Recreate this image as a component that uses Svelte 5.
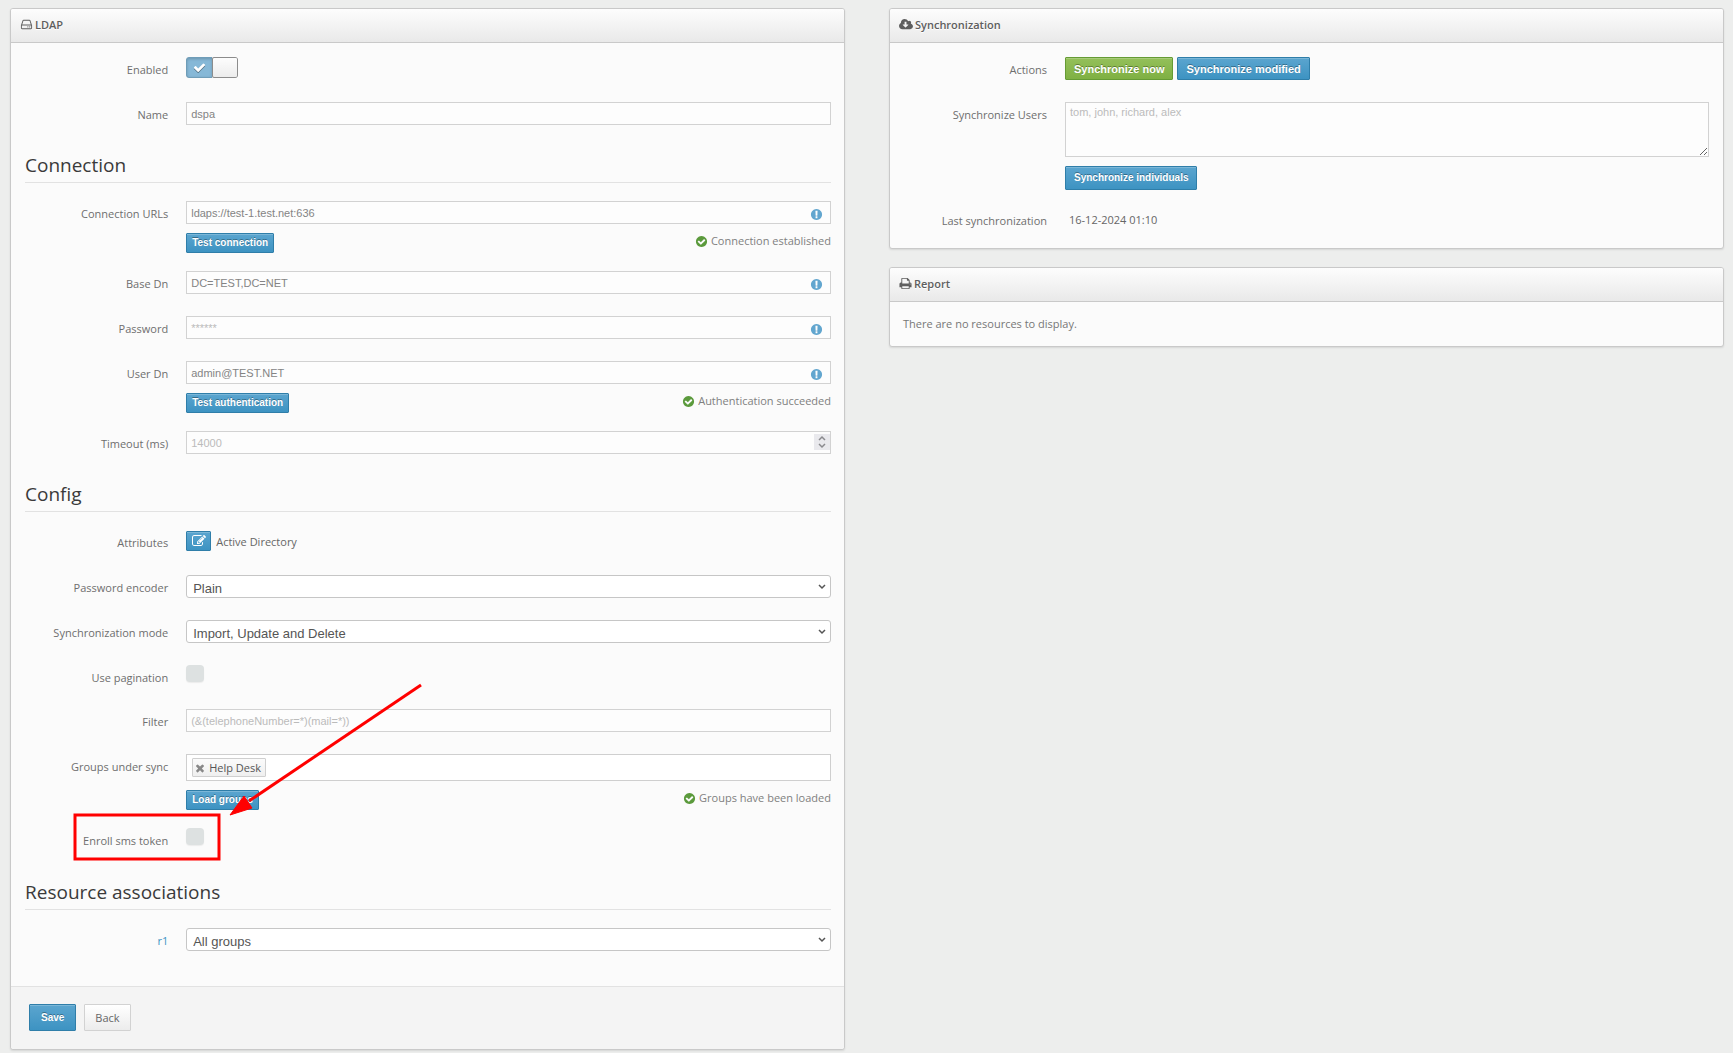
<script>
  let enabled = $state(true);
  let pagination = $state(false);
  let enroll = $state(false);
  let name = $state('dspa');
  let urls = $state('ldaps://test-1.test.net:636');
  let baseDn = $state('DC=TEST,DC=NET');
  let userDn = $state('admin@TEST.NET');
  let groups = $state(['Help Desk']);

  const icons = {
    hdd: 'M1168 1216q0 33-23.5 56.5t-56.5 23.5-56.5-23.5-23.5-56.5 23.5-56.5 56.5-23.5 56.5 23.5 23.5 56.5zm256 0q0 33-23.5 56.5t-56.5 23.5-56.5-23.5-23.5-56.5 23.5-56.5 56.5-23.5 56.5 23.5 23.5 56.5zm112 160v-320q0-13-9.5-22.5t-22.5-9.5h-1216q-13 0-22.5 9.5t-9.5 22.5v320q0 13 9.5 22.5t22.5 9.5h1216q13 0 22.5-9.5t9.5-22.5zm-1230-480h1180l-157-482q-4-13-16-21.5t-26-8.5h-782q-14 0-26 8.5t-16 21.5zm1358 160v320q0 66-47 113t-113 47h-1216q-66 0-113-47t-47-113v-320q0-25 16-75l197-606q17-53 63-86t101-33h782q55 0 101 33t63 86l197 606q16 50 16 75z',
    cloud: 'M1216 928q0-14-9-23t-23-9h-224v-352q0-13-9.5-22.5t-22.5-9.5h-192q-13 0-22.5 9.5t-9.5 22.5v352h-224q-13 0-22.5 9.5t-9.5 22.5q0 14 9 23l352 352q9 9 23 9t23-9l351-351q10-12 10-24zm640 224q0 159-112.5 271.5t-271.5 112.5h-1088q-185 0-316.5-131.5t-131.5-316.5q0-130 70-240t188-165q-2-30-2-43 0-212 150-362t362-150q156 0 285.5 87t188.5 231q71-62 166-62 106 0 181 75t75 181q0 76-41 138 130 31 213.5 135.5t83.5 238.5z',
    print: 'M448 1536h896v-256h-896v256zm0-640h896v-384h-160q-40 0-68-28t-28-68v-160h-640v640zm1152 64q0-26-19-45t-45-19-45 19-19 45 19 45 45 19 45-19 19-45zm128 0v416q0 13-9.5 22.5t-22.5 9.5h-224v160q0 40-28 68t-68 28h-960q-40 0-68-28t-28-68v-160h-224q-13 0-22.5-9.5t-9.5-22.5v-416q0-79 56.5-135.5t135.5-56.5h64v-544q0-40 28-68t68-28h672q40 0 88 20t76 48l152 152q28 28 48 76t20 88v256h64q79 0 135.5 56.5t56.5 135.5z',
    ok: 'M1412 734q0-28-18-46l-91-90q-19-19-45-19t-45 19l-408 407-226-226q-19-19-45-19t-45 19l-91 90q-18 18-18 46 0 27 18 45l362 362q19 19 45 19 27 0 46-19l543-543q18-18 18-45zm252 162q0 209-103 385.5t-279.5 279.5-385.5 103-385.5-103-279.5-279.5-103-385.5 103-385.5 279.5-279.5 385.5-103 385.5 103 279.5 279.5 103 385.5z',
    info: 'M896 128q209 0 385.5 103t279.5 279.5 103 385.5-103 385.5-279.5 279.5-385.5 103-385.5-103-279.5-279.5-103-385.5 103-385.5 279.5-279.5 385.5-103zm128 1247v-190q0-14-9-23.5t-22-9.5h-192q-13 0-23 10t-10 23v190q0 13 10 23t23 10h192q13 0 22-9.5t9-23.5zm-2-344l18-621q0-12-10-18-10-8-24-8h-220q-14 0-24 8-10 6-10 18l17 621q0 10 10 17.5t24 7.5h185q14 0 23.5-7.5t10.5-17.5z',
    check: 'M1671 566q0 40-28 68l-860 860q-28 28-68 28t-68-28l-498-498q-28-28-28-68t28-68l136-136q28-28 68-28t68 28l294 295 656-657q28-28 68-28t68 28l136 136q28 28 28 68z',
    times: 'M1490 1322q0 40-28 68l-136 136q-28 28-68 28t-68-28l-294-294-294 294q-28 28-68 28t-68-28l-136-136q-28-28-28-68t28-68l294-294-294-294q-28-28-28-68t28-68l136-136q28-28 68-28t68 28l294 294 294-294q28-28 68-28t68 28l136 136q28 28 28 68t-28 68l-294 294 294 294q28 28 28 68z',
    edit: 'M888 1184l116-116-152-152-116 116v56h96v96h56zm440-720q-16-16-33 1l-350 350q-17 17-1 33t33-1l350-350q17-17 1-33zm80 594v190q0 119-84.5 203.5t-203.5 84.5h-832q-119 0-203.5-84.5t-84.5-203.5v-832q0-119 84.5-203.5t203.5-84.5h832q63 0 117 25 15 7 18 23 3 17-9 29l-49 49q-14 14-32 8-23-6-45-6h-832q-66 0-113 47t-47 113v832q0 66 47 113t113 47h832q66 0 113-47t47-113v-126q0-13 9-22l64-64q15-15 35-7t20 29zm-96-738l288 288-672 672h-288v-288zm444 132l-92 92-288-288 92-92q28-28 68-28t68 28l152 152q28 28 28 68t-28 68z'
  };
</script>

{#snippet icon(kind, cls)}
  <svg class={cls} viewBox={kind === 'cloud' ? '-64 0 1920 1792' : '0 0 1792 1792'} aria-hidden="true">
    <path d={icons[kind]} />
  </svg>
{/snippet}

{#snippet chevron()}
  <svg class="chevron" viewBox="0 0 8 6" aria-hidden="true"><path d="M1 1l3 3 3-3" /></svg>
{/snippet}

{#snippet status(text)}
  <span class="status">{@render icon('ok', 'ok')}{text}</span>
{/snippet}

<div class="page">
  <form class="panel" onsubmit={(e) => e.preventDefault()}>
    <header>{@render icon('hdd', 'head-icon')}<h1>LDAP</h1></header>
    <div class="body main">
      <div class="row">
        <label for="enabled">Enabled</label>
        <div class="control">
          <span class="switch">
            <input id="enabled" type="checkbox" bind:checked={enabled} />
            <span class="track" class:on={enabled}>
              <span class="half">{@render icon('check', 'tick')}</span>
              <span class="knob"></span>
            </span>
          </span>
        </div>
      </div>
      <div class="row">
        <label for="name">Name</label>
        <div class="control"><input id="name" class="text" type="text" bind:value={name} /></div>
      </div>

      <h2>Connection</h2>
      <div class="row tall">
        <label for="urls">Connection URLs</label>
        <div class="control">
          <div class="wrap">
            <input id="urls" class="text" type="text" bind:value={urls} />
            {@render icon('info', 'info')}
          </div>
          <div class="under">
            <button type="button" class="btn mini">Test connection</button>
            {@render status('Connection established')}
          </div>
        </div>
      </div>
      <div class="row">
        <label for="base">Base Dn</label>
        <div class="control wrap">
          <input id="base" class="text" type="text" bind:value={baseDn} />
          {@render icon('info', 'info')}
        </div>
      </div>
      <div class="row">
        <label for="password">Password</label>
        <div class="control wrap">
          <input id="password" class="text" type="password" placeholder="******" />
          {@render icon('info', 'info')}
        </div>
      </div>
      <div class="row tall">
        <label for="user">User Dn</label>
        <div class="control">
          <div class="wrap">
            <input id="user" class="text" type="text" bind:value={userDn} />
            {@render icon('info', 'info')}
          </div>
          <div class="under">
            <button type="button" class="btn mini">Test authentication</button>
            {@render status('Authentication succeeded')}
          </div>
        </div>
      </div>
      <div class="row">
        <label for="timeout">Timeout (ms)</label>
        <div class="control wrap">
          <input id="timeout" class="text" type="number" placeholder="14000" />
          <svg class="spinner" viewBox="0 0 16 16" aria-hidden="true">
            <path d="M5 6l3-3 3 3M5 10l3 3 3-3" />
          </svg>
        </div>
      </div>

      <h2>Config</h2>
      <div class="row">
        <label for="attributes">Attributes</label>
        <div class="control inline">
          <button id="attributes" type="button" class="btn mini square" aria-label="Edit attributes">
            {@render icon('edit', 'edit')}
          </button>
          <span>Active Directory</span>
        </div>
      </div>
      <div class="row">
        <label for="encoder">Password encoder</label>
        <div class="control wrap">
          <select id="encoder"><option>Plain</option></select>
          {@render chevron()}
        </div>
      </div>
      <div class="row">
        <label for="mode">Synchronization mode</label>
        <div class="control wrap">
          <select id="mode"><option>Import, Update and Delete</option></select>
          {@render chevron()}
        </div>
      </div>
      <div class="row short">
        <label for="pagination">Use pagination</label>
        <div class="control"><input id="pagination" class="box" type="checkbox" bind:checked={pagination} /></div>
      </div>
      <div class="row">
        <label for="filter">Filter</label>
        <div class="control">
          <input id="filter" class="text" type="text" placeholder="(&(telephoneNumber=*)(mail=*))" />
        </div>
      </div>
      <div class="row groups">
        <label for="groups">Groups under sync</label>
        <div class="control">
          <div class="tags">
            {#each groups as group}
              <span class="tag">
                <button type="button" aria-label="Remove {group}" onclick={() => (groups = groups.filter((g) => g !== group))}>
                  {@render icon('times', 'times')}
                </button>
                {group}
              </span>
            {/each}
            <input id="groups" type="text" />
          </div>
          <div class="under">
            <button type="button" class="btn mini">Load groups</button>
            {@render status('Groups have been loaded')}
          </div>
        </div>
      </div>
      <div class="row enroll">
        <label for="enroll">Enroll sms token</label>
        <div class="control"><input id="enroll" class="box" type="checkbox" bind:checked={enroll} /></div>
        <svg class="callout" viewBox="0 0 360 190" aria-hidden="true">
          <rect x="10" y="141" width="144" height="44" />
          <path class="shaft" d="M356 11L184 127" />
          <path class="tip" d="M165 141l14-19 8 12z" />
        </svg>
      </div>

      <h2>Resource associations</h2>
      <div class="row">
        <label for="resource"><a href="#r1">r1</a></label>
        <div class="control wrap">
          <select id="resource"><option>All groups</option></select>
          {@render chevron()}
        </div>
      </div>
    </div>
    <footer>
      <button type="submit" class="btn large">Save</button>
      <button type="button" class="btn large plain">Back</button>
    </footer>
  </form>

  <div class="side">
    <section class="panel">
      <header>{@render icon('cloud', 'head-icon wide')}<h1>Synchronization</h1></header>
      <div class="body">
        <div class="row">
          <span class="label">Actions</span>
          <div class="control actions">
            <button type="button" class="btn green">Synchronize now</button>
            <button type="button" class="btn">Synchronize modified</button>
          </div>
        </div>
        <div class="row users">
          <label for="users">Synchronize Users</label>
          <div class="control">
            <textarea id="users" placeholder="tom, john, richard, alex"></textarea>
            <button type="button" class="btn small">Synchronize individuals</button>
          </div>
        </div>
        <div class="row last">
          <span class="label">Last synchronization</span>
          <div class="control date">16-12-2024 01:10</div>
        </div>
      </div>
    </section>
    <section class="panel">
      <header>{@render icon('print', 'head-icon')}<h1>Report</h1></header>
      <p class="empty">There are no resources to display.</p>
    </section>
  </div>
</div>

<style>
  :global(body) {
    background: #edeeed;
    color: #666;
    font: 11px/18px 'Open Sans', 'Noto Sans', sans-serif;
  }
  .page {
    display: grid;
    grid-template-columns: 1fr 1fr;
    gap: 44px;
    align-items: start;
    padding: 8px 9px 3px 10px;
  }
  .side {
    display: grid;
    gap: 18px;
  }
  .panel {
    background: #fbfbfb;
    border: 1px solid #c9c9c9;
    border-radius: 3px;
    box-shadow: 0 1px 2px rgba(0, 0, 0, 0.1);
  }
  header {
    display: flex;
    align-items: center;
    gap: 2px;
    height: 33px;
    padding: 0 9px;
    border-bottom: 1px solid #c9c9c9;
    border-radius: 2px 2px 0 0;
    background: linear-gradient(#fdfdfd, #e9e9e9);
    text-shadow: 0 1px 0 #fff;
  }
  h1 {
    margin: 0;
    padding-bottom: 2px;
    font-size: 11px;
    line-height: 18px;
    font-weight: 600;
    color: #5e5e5e;
  }
  h2 {
    height: 35px;
    margin: 0 0 18px;
    border-bottom: 1px solid #e2e2e2;
    font-size: 19px;
    line-height: 36px;
    font-weight: 400;
    color: #3a3a3a;
  }
  svg {
    flex: none;
    fill: currentColor;
  }
  .head-icon {
    width: 13px;
    height: 13px;
    margin-bottom: 2px;
    color: #5e5e5e;
  }
  .head-icon.wide {
    width: 14px;
  }
  .body {
    padding: 14px 14px 13px;
  }
  .main {
    padding-right: 13px;
  }
  .row {
    position: relative;
    display: grid;
    grid-template-columns: 20% 80%;
    align-items: start;
    min-height: 45px;
  }
  .tall {
    min-height: 70px;
  }
  .short {
    min-height: 44px;
  }
  .groups {
    min-height: 74px;
  }
  .enroll {
    min-height: 46px;
  }
  .users {
    min-height: 106px;
  }
  .last {
    min-height: 27px;
  }
  label,
  .label {
    padding: 4px 18px 0 0;
    text-align: right;
    color: #6e6e6e;
  }
  a {
    color: #3d94c4;
    text-decoration: none;
  }
  .control {
    min-width: 0;
  }
  .wrap {
    position: relative;
  }
  input,
  select,
  textarea,
  button {
    box-sizing: border-box;
    margin: 0;
    font-family: 'Liberation Sans', Arial, sans-serif;
    font-size: 11px;
  }
  .text,
  textarea {
    display: block;
    width: 100%;
    border: 1px solid #d2d2d2;
    border-radius: 0;
    background: #fdfdfd;
    color: #848484;
    outline: none;
  }
  .text {
    height: 23px;
    padding: 0 4px;
  }
  textarea {
    height: 55px;
    margin-bottom: 9px;
    padding: 3px 4px;
    resize: vertical;
  }
  ::placeholder {
    color: #bbb;
    opacity: 1;
  }
  input[type='number'] {
    appearance: textfield;
  }
  input[type='number']::-webkit-inner-spin-button {
    appearance: none;
  }
  .info {
    position: absolute;
    right: 8px;
    top: 7px;
    width: 13px;
    height: 13px;
    color: #62a6cf;
  }
  .spinner {
    position: absolute;
    right: 1px;
    top: 3px;
    width: 16px;
    height: 16px;
    background: #e9e9ed;
    fill: none;
    stroke: #8a8a8e;
    stroke-width: 1.5;
  }
  .chevron {
    position: absolute;
    right: 5px;
    top: 9px;
    width: 8px;
    height: 6px;
    fill: none;
    stroke: #555;
    stroke-width: 1.5;
    pointer-events: none;
  }
  select {
    display: block;
    width: 100%;
    height: 23px;
    padding: 3px 6px 0;
    appearance: none;
    border: 1px solid #c6c6c6;
    border-radius: 3px;
    background: #fff;
    color: #555;
    font-size: 13px;
  }
  .under {
    display: flex;
    justify-content: space-between;
    align-items: start;
    margin-top: 9px;
  }
  .status {
    display: flex;
    align-items: center;
    gap: 3px;
    margin-top: -1px;
    color: #808080;
  }
  .ok {
    width: 13px;
    height: 13px;
    color: #5b9a3c;
  }
  .btn {
    height: 23px;
    padding: 0 8px;
    border: 1px solid #2f7ea9;
    border-radius: 1px;
    background: linear-gradient(#5ba5cf, #3d93c2);
    box-shadow: inset 0 1px 0 rgba(255, 255, 255, 0.2);
    color: #fff;
    font-weight: 700;
    line-height: 18px;
    text-shadow: 0 -1px 0 rgba(0, 0, 0, 0.35);
    white-space: nowrap;
  }
  .small {
    height: 24px;
    font-size: 10px;
  }
  .mini {
    height: 20px;
    padding: 0 5px;
    font-size: 10px;
  }
  .green {
    border-color: #659b34;
    background: linear-gradient(#94c05a, #7fb043);
  }
  .large {
    height: 27px;
    padding: 0 11px;
    font-size: 10px;
  }
  .plain {
    padding: 0 10px;
    border-color: #d2d2d2;
    background: linear-gradient(#fff, #ececec);
    color: #666;
    font-family: 'Open Sans', 'Noto Sans', sans-serif;
    font-size: 11px;
    font-weight: 400;
    text-shadow: none;
  }
  .square {
    display: flex;
    align-items: center;
    justify-content: center;
    width: 25px;
    padding: 0;
  }
  .edit {
    width: 14px;
    height: 14px;
  }
  .inline {
    display: flex;
    align-items: center;
    gap: 5px;
    height: 24px;
  }
  .inline .btn {
    margin-bottom: 2px;
  }
  .actions {
    display: flex;
    gap: 4px;
  }
  .date {
    padding: 3px 4px 0;
  }
  .switch {
    position: relative;
    display: block;
    width: 52px;
    height: 21px;
  }
  .switch input {
    position: absolute;
    inset: 0;
    width: 100%;
    height: 100%;
    opacity: 0;
    z-index: 1;
  }
  .track {
    display: flex;
    box-sizing: border-box;
    height: 21px;
    border-radius: 3px;
    overflow: hidden;
    background: #ddd;
  }
  .half,
  .knob {
    box-sizing: border-box;
    flex: 1;
  }
  .half {
    display: flex;
    align-items: center;
    justify-content: center;
    border: 1px solid #6f9db8;
    border-right: 0;
    border-radius: 3px 0 0 3px;
    background: #86b8d7;
    box-shadow: inset 0 1px 3px rgba(0, 0, 0, 0.2);
    color: #fff;
  }
  .track:not(.on) .half {
    order: 1;
    background: #e4e4e4;
  }
  .knob {
    border: 1px solid #8c8c8c;
    border-radius: 2px;
    background: linear-gradient(#fdfdfd, #ececec);
  }
  .tick {
    width: 13px;
    height: 13px;
    filter: drop-shadow(0 1px 0 rgba(0, 0, 0, 0.4));
  }
  .box {
    display: block;
    width: 18px;
    height: 17px;
    appearance: none;
    border-radius: 4px;
    background: #dde1e1;
    box-shadow: 0 1px 1px #ececec;
  }
  .box:checked {
    background: #62a6cf;
  }
  .tags {
    display: flex;
    align-items: center;
    box-sizing: border-box;
    height: 27px;
    padding: 0 5px;
    border: 1px solid #cfcfcf;
    background: #fff;
  }
  .tags input {
    flex: 1;
    min-width: 0;
    border: 0;
    outline: none;
    background: none;
  }
  .tag {
    display: flex;
    align-items: center;
    gap: 3px;
    box-sizing: border-box;
    height: 19px;
    padding: 0 4px 0 1px;
    border: 1px solid #cfcfcf;
    border-radius: 1px;
    background: linear-gradient(#fbfbfb, #efefef);
    color: #555;
  }
  .tag button {
    display: flex;
    padding: 0;
    border: 0;
    background: none;
    color: #888;
  }
  .times {
    width: 12px;
    height: 12px;
  }
  .callout {
    position: absolute;
    left: 40px;
    top: -154px;
    width: 360px;
    height: 190px;
    fill: none;
    stroke: #f00;
    stroke-width: 3;
    pointer-events: none;
  }
  .callout .tip {
    fill: #f00;
    stroke-width: 1;
  }
  footer {
    display: flex;
    gap: 8px;
    padding: 17px 18px 18px;
    border-top: 1px solid #e2e2e2;
    border-radius: 0 0 3px 3px;
    background: #f4f4f4;
  }
  .empty {
    margin: 0;
    padding: 13px;
    color: #777;
  }
</style>
